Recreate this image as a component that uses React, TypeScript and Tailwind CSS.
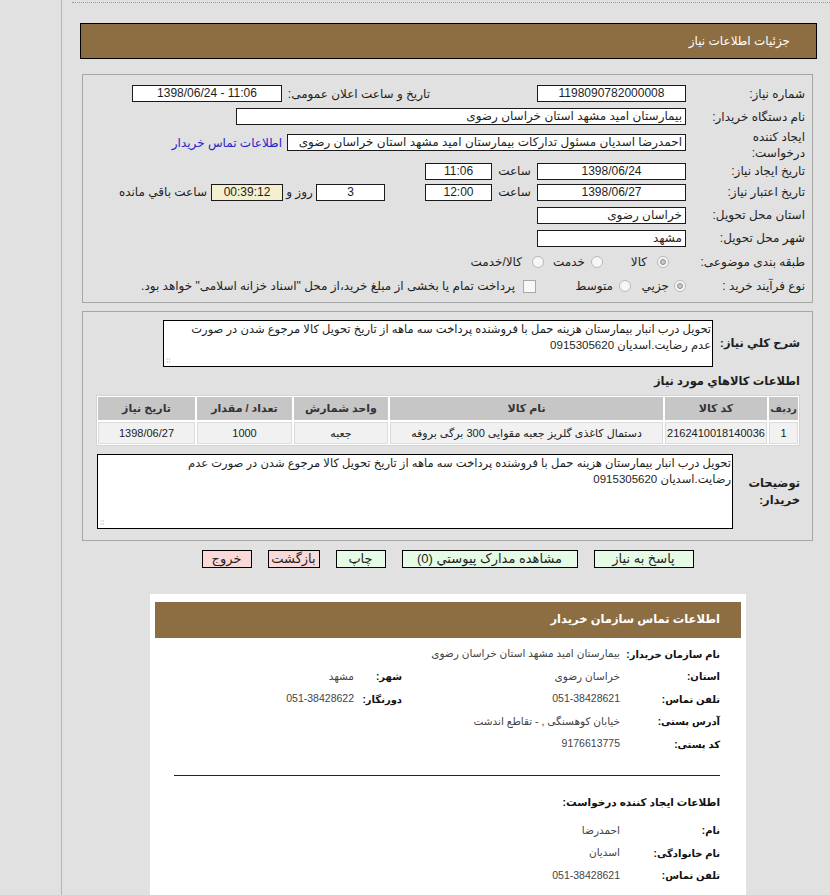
import React from 'react';

const Field: React.FC<{ className?: string; children?: React.ReactNode }> = ({ className = '', children }) => (
  <div className={`h-[17px] shrink-0 overflow-hidden whitespace-nowrap border border-[#1a1a1a] px-[3px] text-[12px] leading-[15px] ${className}`}>
    {children}
  </div>
);

const Radio: React.FC<{ checked?: boolean }> = ({ checked }) => (
  <span className="inline-flex h-[12px] w-[12px] shrink-0 items-center justify-center rounded-full border border-[#b8b8b8] bg-[#f6f6f6]">
    {checked && <span className="h-[6px] w-[6px] rounded-full border border-[#8a8a8a] bg-[#c8c8c8]" />}
  </span>
);

const Label: React.FC<{ children: React.ReactNode }> = ({ children }) => (
  <div className="w-[126px] shrink-0 pr-[7px] text-[12px] leading-[16px]">{children}</div>
);

const InfoRow: React.FC<{ label: string; value: string; label2?: string; value2?: string }> = ({ label, value, label2, value2 }) => (
  <div className="flex h-[22.5px] items-center whitespace-nowrap">
    <div className="w-[100px] shrink-0 text-[10px] font-bold text-[#111]">{label}</div>
    <div className="w-[218px] shrink-0 text-[10.5px] text-[#444]">{value}</div>
    {label2 && <div className="w-[48px] shrink-0 text-[10px] font-bold text-[#111]">{label2}</div>}
    {value2 && <div className="text-[10.5px] text-[#444]">{value2}</div>}
  </div>
);

const headers = ['ردیف', 'کد کالا', 'نام کالا', 'واحد شمارش', 'تعداد / مقدار', 'تاریخ نیاز'];
const row = ['1', '2162410018140036', 'دستمال کاغذی گلریز جعبه مقوایی 300 برگی بروفه', 'جعبه', '1000', '1398/06/27'];

export default function App() {
  return (
    <div className="min-h-screen bg-[#e1e1e1] font-['Tahoma','Liberation_Sans','DejaVu_Sans',sans-serif] text-[#1e1e1e]">
      <div className="flex">
        <div className="w-[62px] shrink-0 border-r border-[#b4b4b4]" />
        <div dir="rtl" className="flex-1 pt-[2px] pb-[20px]">
          <div className="ml-[10px] border-t border-dotted border-[#9a9a9a]" />

          {/* page title */}
          <div className="mt-[20px] ml-[18px] mr-[13px] flex h-[36px] items-center border border-black bg-[#8d6d42] pr-[26px] text-[12px] text-white">
            جزئیات اطلاعات نیاز
          </div>

          {/* main details */}
          <div className="mt-[15px] ml-[20px] mr-[17px] border border-[#a6a6a6] pt-[8px] pb-[4px]">
            <div className="flex h-[21px] items-center">
              <Label>شماره نیاز:</Label>
              <Field className="w-[149px] bg-white text-center">1198090782000008</Field>
              <div className="w-[107px] shrink-0" />
              <div className="w-[148px] shrink-0 text-[12px]">تاریخ و ساعت اعلان عمومی:</div>
              <Field className="w-[150px] bg-white text-center">
                <span dir="ltr">1398/06/24 - 11:06</span>
              </Field>
            </div>

            <div className="flex h-[25px] items-center">
              <Label>نام دستگاه خریدار:</Label>
              <Field className="w-[450px] bg-white">بیمارستان امید مشهد استان خراسان رضوی</Field>
            </div>

            <div className="flex h-[32px] items-center">
              <Label>
                ایجاد کننده
                <br />
                درخواست:
              </Label>
              <Field className="mt-[-5px] w-[399px] bg-white">احمدرضا اسدیان مسئول تدارکات بیمارستان امید مشهد استان خراسان رضوی</Field>
              <a href="#" className="mt-[-5px] pr-[5px] text-[12px] text-[#2424c8]">
                اطلاعات تماس خریدار
              </a>
            </div>

            <div className="flex h-[20px] items-center">
              <Label>تاریخ ایجاد نیاز:</Label>
              <Field className="w-[149px] bg-white text-center">1398/06/24</Field>
              <div className="w-[45px] shrink-0 text-center text-[12px]">ساعت</div>
              <Field className="w-[67px] bg-white text-center">11:06</Field>
            </div>

            <div className="flex h-[22px] items-center">
              <Label>تاریخ اعتبار نیاز:</Label>
              <Field className="w-[149px] bg-white text-center">1398/06/27</Field>
              <div className="w-[45px] shrink-0 text-center text-[12px]">ساعت</div>
              <Field className="w-[67px] bg-white text-center">12:00</Field>
              <div className="w-[40px] shrink-0" />
              <Field className="w-[69px] bg-white text-center">3</Field>
              <div className="w-[33px] shrink-0 text-center text-[12px]">روز و</div>
              <Field className="w-[72px] bg-[#f3efcf] text-center">00:39:12</Field>
              <div className="pr-[4px] text-[12px]">ساعت باقي مانده</div>
            </div>

            <div className="flex h-[24px] items-center">
              <Label>استان محل تحویل:</Label>
              <Field className="w-[149px] bg-white">خراسان رضوی</Field>
            </div>

            <div className="flex h-[22px] items-center">
              <Label>شهر محل تحویل:</Label>
              <Field className="w-[149px] bg-white">مشهد</Field>
            </div>

            <div className="flex h-[25px] items-center text-[12px]">
              <Label>طبقه بندی موضوعی:</Label>
              <div className="flex items-center pr-[17px]">
                <Radio checked />
                <span className="w-[54px] pr-[10px]">کالا</span>
                <Radio />
                <span className="w-[47px] pr-[6px]">خدمت</span>
                <Radio />
                <span className="pr-[10px]">کالا/خدمت</span>
              </div>
            </div>

            <div className="flex h-[24px] items-center text-[12px]">
              <Label>نوع فرآیند خرید :</Label>
              <div className="flex items-center whitespace-nowrap">
                <Radio checked />
                <span className="w-[43px] pr-[5px]">جزیي</span>
                <Radio />
                <span className="w-[83px] pr-[6px]">متوسط</span>
                <span className="h-[13px] w-[13px] shrink-0 border border-[#a8a8a8] bg-[#f8f8f8]" />
                <span className="pr-[8px]">پرداخت تمام یا بخشی از مبلغ خرید،از محل "اسناد خزانه اسلامی" خواهد بود.</span>
              </div>
            </div>
          </div>

          {/* description & items */}
          <div className="mt-[8px] ml-[20px] mr-[17px] border border-[#a6a6a6] pt-[8px] pb-[11px]">
            <div className="flex items-center">
              <div className="w-[99px] shrink-0 whitespace-nowrap pr-[12px] text-[11.5px] font-bold">شرح کلي نیاز:</div>
              <div className="relative h-[47px] w-[550px] overflow-hidden whitespace-nowrap border border-black bg-white px-[1px] text-[11.5px] leading-[16px]">
                تحویل درب انبار بیمارستان هزینه حمل با فروشنده پرداخت سه ماهه از تاریخ تحویل کالا مرجوع شدن در صورت
                <br />
                عدم رضایت.اسدیان 0915305620
                <span className="absolute bottom-0 left-[2px] text-[8px] leading-[10px] text-[#bbb]">⁞⁞</span>
              </div>
            </div>

            <div className="mt-[5px] h-[18px] whitespace-nowrap pr-[12px] text-[11.5px] font-bold leading-[18px]">اطلاعات کالاهاي مورد نیاز</div>

            <div className="mt-[5px] ml-[13px] mr-[12px] grid grid-cols-[29px_102px_273px_94px_95px_1fr] gap-[2px] border border-[#d4d4d4] bg-white p-[1px] text-[11px]">
              {headers.map((h, i) => (
                <div
                  key={h}
                  className={`flex h-[23px] items-center justify-center whitespace-nowrap bg-[#c6c6c6] font-bold text-[#333] ${i === 0 ? 'text-[10px]' : ''}`}
                >
                  {h}
                </div>
              ))}
              {row.map((c, i) => (
                <div key={i} className="flex h-[22px] items-center justify-center whitespace-nowrap border border-[#dcdcdc] bg-[#f1f1f1] text-[#222]">
                  {c}
                </div>
              ))}
            </div>

            <div className="mt-[8px] flex items-center">
              <div className="w-[79px] shrink-0 pr-[12px] text-[11.5px] font-bold leading-[17px]">
                توضیحات
                <br />
                خریدار:
              </div>
              <div className="relative h-[75px] w-[636px] overflow-hidden whitespace-nowrap border border-black bg-white px-[1px] text-[11.5px] leading-[16px]">
                تحویل درب انبار بیمارستان هزینه حمل با فروشنده پرداخت سه ماهه از تاریخ تحویل کالا مرجوع شدن در صورت عدم
                <br />
                رضایت.اسدیان 0915305620
                <span className="absolute bottom-0 left-[2px] text-[8px] leading-[10px] text-[#bbb]">⁞⁞</span>
              </div>
            </div>
          </div>

          {/* actions */}
          <div className="mt-[9px] ml-[20px] mr-[17px] flex justify-center gap-[16px] text-[13px]">
            <button className="h-[18px] w-[100px] border border-black bg-[#e6fbe6] leading-[16px]">پاسخ به نیاز</button>
            <button className="h-[18px] w-[176px] border border-black bg-[#e6fbe6] leading-[16px]">مشاهده مدارک پیوستي (0)</button>
            <button className="h-[18px] w-[50px] border border-black bg-[#e6fbe6] leading-[16px]">چاپ</button>
            <button className="h-[18px] w-[52px] border border-black bg-[#fbd9d9] leading-[16px]">بازگشت</button>
            <button className="h-[18px] w-[50px] border border-black bg-[#fbd9d9] leading-[16px]">خروج</button>
          </div>

          {/* buyer contact card */}
          <div className="mt-[26px] ml-[88px] mr-[84px] bg-white px-[5px] pt-[8px] pb-[30px]">
            <div className="flex h-[36px] items-center bg-[#8d6d42] pr-[21px] text-[11.5px] font-bold text-white">
              اطلاعات تماس سازمان خریدار
            </div>
            <div className="mt-[5px] pr-[21px]">
              <InfoRow label="نام سازمان خریدار:" value="بیمارستان امید مشهد استان خراسان رضوی" />
              <InfoRow label="استان:" value="خراسان رضوی" label2="شهر:" value2="مشهد" />
              <InfoRow label="تلفن تماس:" value="051-38428621" label2="دورنگار:" value2="051-38428622" />
              <InfoRow label="آدرس پستی:" value="خیابان کوهسنگی , - تقاطع اندشت" />
              <InfoRow label="کد پستی:" value="9176613775" />
            </div>
            <div className="mt-[19px] ml-[19px] mr-[21px] border-t border-[#222]" />
            <div className="mt-[17px] h-[18px] pr-[21px] text-[10.5px] font-bold leading-[18px] text-[#111]">
              اطلاعات ایجاد کننده درخواست:
            </div>
            <div className="mt-[9px] pr-[21px]">
              <InfoRow label="نام:" value="احمدرضا" />
              <InfoRow label="نام خانوادگی:" value="اسدیان" />
              <InfoRow label="تلفن تماس:" value="051-38428621" />
            </div>
          </div>
        </div>
      </div>
    </div>
  );
}
